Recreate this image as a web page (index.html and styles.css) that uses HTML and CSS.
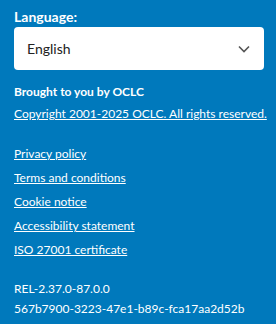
FILE: index.html
```html
<!DOCTYPE html>
<html lang="en">
<head>
<meta charset="utf-8">
<link rel="stylesheet" href="styles.css">
</head>
<body>
<footer class="footer">
  <div class="lang">
    <label class="lang-label" for="lang">Language:</label>
    <div class="select">
      <span class="select-value">English</span>
      <svg class="chevron" width="12" height="8" viewBox="0 0 12 8"><path d="M1 1.5 L6 6.5 L11 1.5" fill="none" stroke="#555" stroke-width="1.6"/></svg>
    </div>
  </div>
  <div class="brought">
    <p class="brought-title">Brought to you by OCLC</p>
    <a class="link copyright" href="#">Copyright 2001-2025 OCLC. All rights reserved.</a>
  </div>
  <ul class="links">
    <li><a class="link" href="#">Privacy policy</a></li>
    <li><a class="link" href="#">Terms and conditions</a></li>
    <li><a class="link" href="#">Cookie notice</a></li>
    <li><a class="link" href="#">Accessibility statement</a></li>
    <li><a class="link" href="#">ISO 27001 certificate</a></li>
  </ul>
  <div class="version">
    <div>REL-2.37.0-87.0.0</div>
    <div>567b7900-3223-47e1-b89c-fca17aa2d52b</div>
  </div>
</footer>
</body>
</html>
```
FILE: styles.css
```css
html, body {
  margin: 0;
  padding: 0;
  background: #0079bc;
}
.footer {
  font-family: Lato, "Open Sans", sans-serif;
  color: #fff;
  padding: 8px 4px 0 14px;
  font-size: 12px;
}
.lang {
  display: flex;
  flex-direction: column;
  margin-right: 8px;
}
.lang-label {
  font-weight: 700;
  font-size: 14px;
  line-height: 18px;
  margin-bottom: 1px;
}
.select {
  background: #fff;
  border-radius: 4px;
  height: 43px;
  display: flex;
  align-items: center;
  justify-content: space-between;
  padding: 0 14px 0 13px;
  color: #222;
  font-size: 14px;
}
.chevron {
  display: block;
}
.brought {
  margin-top: 12px;
  display: flex;
  flex-direction: column;
}
.brought-title {
  margin: 0;
  font-weight: 700;
  line-height: 20px;
}
.link {
  color: #fff;
  text-decoration: underline;
  line-height: 22px;
}
.copyright {
  line-height: 24px;
}
.links {
  list-style: none;
  margin: 16px 0 0;
  padding: 0;
  display: flex;
  flex-direction: column;
}
.links li {
  line-height: 24px;
}
.version {
  margin-top: 17px;
  line-height: 20px;
}
```
